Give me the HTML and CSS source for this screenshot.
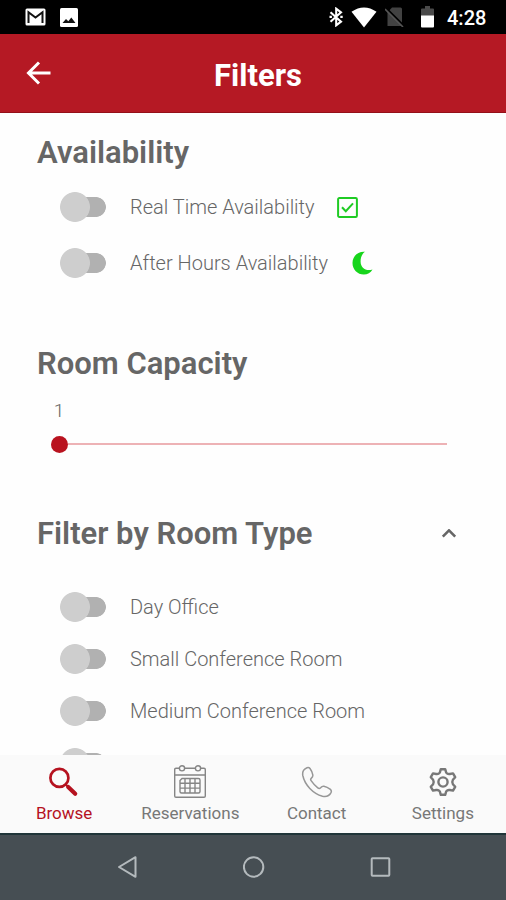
FILE: index.html
```html
<!DOCTYPE html>
<html lang="en">
<head>
    <meta charset="UTF-8">
    <title>Filters</title>
    <link rel="stylesheet" href="styles.css">
</head>
<body>
    <div class="status-bar">
        <div class="status-left">
            <svg width="21" height="18" viewBox="0 0 21 18">
                <rect x="0.5" y="0.5" width="20" height="17" rx="1.5" fill="#fff"/>
                <path d="M3.5 15V4.2L10.5 9.5L17.5 4.2V15" fill="none" stroke="#111" stroke-width="2"/>
            </svg>
            <svg width="18" height="19" viewBox="0 0 18 19">
                <rect width="18" height="19" rx="1.5" fill="#fff"/>
                <path d="M2.5 15L6 11L8.3 13.2L11.3 9.5L15.5 15Z" fill="#111"/>
            </svg>
        </div>
        <div class="status-right">
            <svg class="bluetooth" width="14" height="20" viewBox="0 0 14 20">
                <path d="M1.5 5.3L12 14.6L7.2 18.3V1.7L12 5.4L1.5 14.7" fill="none" stroke="#fff" stroke-width="2.1"/>
                <path d="M0.5 8.7h2.4v2.4H0.5zM11.3 8.7h2.4v2.4h-2.4z" fill="#fff"/>
            </svg>
            <svg class="wifi" width="26" height="21" viewBox="0 0 26 21">
                <path d="M0.5 4.8Q13 -3.8 25.5 4.8L13 20.5Z" fill="#fff"/>
            </svg>
            <svg class="no-sim" width="20" height="20" viewBox="0 0 20 20">
                <path d="M7 0.5H15.5Q17 0.5 17 2V19H2.5V5.5Z" fill="#424242"/>
                <path d="M1.5 1.5L19.5 19.5" stroke="#000" stroke-width="2"/>
                <path d="M0 2L18 20" stroke="#555" stroke-width="1.6"/>
            </svg>
            <svg class="battery" width="13" height="22" viewBox="0 0 13 22">
                <path d="M0 3.5Q0 2.5 1 2.5H4V0H9V2.5H12Q13 2.5 13 3.5V10H0Z" fill="#4a4a4a"/>
                <path d="M0 9.5H13V20.5Q13 21.5 12 21.5H1Q0 21.5 0 20.5Z" fill="#fff"/>
            </svg>
            <span class="time">4:28</span>
        </div>
    </div>

    <div class="header">
        <svg class="back" width="26" height="24" viewBox="0 0 26 24">
            <path d="M24.5 12H2.5M13 1.5L2.5 12L13 22.5" fill="none" stroke="#fff" stroke-width="3"/>
        </svg>
        <h1>Filters</h1>
    </div>

    <div class="content">
        <h2>Availability</h2>
        <div class="row">
            <div class="switch"></div>
            <span class="label">Real Time Availability</span>
            <svg class="check-icon" width="21" height="21" viewBox="0 0 21 21">
                <rect x="1.1" y="1.1" width="18.8" height="18.8" rx="1.2" fill="none" stroke="#1fcb24" stroke-width="2"/>
                <path d="M5 10.2L8.8 14.2L16 6.3" fill="none" stroke="#1fcb24" stroke-width="2"/>
            </svg>
        </div>
        <div class="row">
            <div class="switch"></div>
            <span class="label">After Hours Availability</span>
            <svg class="moon-icon" width="21" height="24" viewBox="0 0 21 24">
                <path d="M13 0.8C5.5 0.2 0.5 5.4 0.5 12C0.5 18.6 5.5 23.5 11.8 23.5C15.6 23.5 18.6 21.7 20.5 18.5C14 20.5 8.6 17 8.6 10.4C8.6 6.3 10.2 2.8 13 0.8Z" fill="#17d51c"/>
            </svg>
        </div>

        <h2 class="capacity-title">Room Capacity</h2>
        <div class="capacity">
            <div class="capacity-value">1</div>
            <div class="slider">
                <div class="slider-thumb"></div>
                <div class="slider-track"></div>
            </div>
        </div>

        <div class="type-title">
            <h2>Filter by Room Type</h2>
            <svg width="16" height="10" viewBox="0 0 16 10">
                <path d="M1.8 7.6L8 1.4L14.2 7.6" fill="none" stroke="#666" stroke-width="2.6"/>
            </svg>
        </div>
        <div class="type-list">
            <div class="row">
                <div class="switch"></div>
                <span class="label">Day Office</span>
            </div>
            <div class="row">
                <div class="switch"></div>
                <span class="label">Small Conference Room</span>
            </div>
            <div class="row">
                <div class="switch"></div>
                <span class="label">Medium Conference Room</span>
            </div>
            <div class="row">
                <div class="switch"></div>
            </div>
        </div>
    </div>

    <div class="tab-bar">
        <div class="tab active">
            <svg width="32" height="34" viewBox="0 0 32 34">
                <circle cx="11.4" cy="12.9" r="9" fill="none" stroke="#b5121f" stroke-width="2.7"/>
                <path d="M17.6 19.4L21 22.6" stroke="#b5121f" stroke-width="2"/>
                <path d="M20.2 22L27.2 28.8" stroke="#b5121f" stroke-width="4.2" stroke-linecap="round"/>
            </svg>
            <span>Browse</span>
        </div>
        <div class="tab">
            <svg width="32" height="34" viewBox="0 0 32 34" fill="none" stroke="#858585" stroke-width="1.4">
                <path d="M5.4 3.2H2Q0.7 3.2 0.7 4.5V31Q0.7 32.3 2 32.3H30Q31.3 32.3 31.3 31V4.5Q31.3 3.2 30 3.2H26.6M10.6 3.2H21.4M0.7 10H31.3"/>
                <circle cx="8" cy="3.3" r="2.6"/>
                <circle cx="24" cy="3.3" r="2.6"/>
                <path d="M8 13.5H24.5Q26 13.5 26 15V26.5Q26 28 24.5 28H7.5Q6 28 6 26.5V15.5ZM6 18.2H26M6 23.1H26M11 13.5V28M16 13.5V28M21 13.5V28"/>
            </svg>
            <span>Reservations</span>
        </div>
        <div class="tab">
            <svg width="32" height="34" viewBox="0 0 32 34" fill="none" stroke="#979797" stroke-width="1.5">
                <path d="M6 2.8C3 4 1.2 7 1.8 10.5C3.8 20 12 28.5 21.5 31.2C25 32 28.4 30.6 30 27.6C30.6 26.4 30.4 25.3 29.4 24.4C27.3 22.7 25.2 21.6 22.9 21.2C21.5 21 20.4 21.8 19.6 22.8C18.8 23.7 17.8 23.7 16.8 22.9C14.1 20.8 12 18.5 10.1 15.7C9.4 14.7 9.5 13.9 10.4 13.1C11.5 12.2 12 11.2 11.8 9.9C11.4 7.6 10.5 5.5 9 3.5C8.2 2.5 7.2 2.3 6 2.8Z"/>
            </svg>
            <span>Contact</span>
        </div>
        <div class="tab">
            <svg width="32" height="34" viewBox="0 0 32 34" fill="none" stroke="#777" stroke-width="2.4" stroke-linejoin="round">
                <path d="M13.8 4.2H18.2L19.2 7.6Q20.5 9.4 22.8 9L26 8.4L28.2 12.2L25.9 14.8Q24.7 17 25.9 19.2L28.2 21.8L26 25.6L22.8 25Q20.5 24.6 19.2 26.4L18.2 29.8H13.8L12.8 26.4Q11.5 24.6 9.2 25L6 25.6L3.8 21.8L6.1 19.2Q7.3 17 6.1 14.8L3.8 12.2L6 8.4L9.2 9Q11.5 9.4 12.8 7.6Z"/>
                <circle cx="16" cy="17" r="4.6"/>
            </svg>
            <span>Settings</span>
        </div>
    </div>

    <div class="nav-bar">
        <svg width="22" height="24" viewBox="0 0 22 24">
            <path d="M3 12L19.5 2.2V21.8Z" fill="none" stroke="#b4babd" stroke-width="2" stroke-linejoin="round"/>
        </svg>
        <svg width="22" height="24" viewBox="0 0 22 24">
            <circle cx="10.6" cy="12" r="9.7" fill="none" stroke="#b4babd" stroke-width="2"/>
        </svg>
        <svg width="22" height="24" viewBox="0 0 22 24">
            <rect x="1.7" y="3.2" width="17.6" height="17.6" rx="0.8" fill="none" stroke="#b4babd" stroke-width="2"/>
        </svg>
    </div>
</body>
</html>
```
FILE: styles.css
```css
* {
    margin: 0;
    padding: 0;
    box-sizing: border-box;
}

body {
    width: 506px;
    height: 900px;
    display: flex;
    flex-direction: column;
    overflow: hidden;
    background: #fefefe;
    font-family: Roboto, "Liberation Sans", sans-serif;
    color: #666;
}

svg {
    display: block;
    flex-shrink: 0;
}

/* status bar */
.status-bar {
    height: 34px;
    flex-shrink: 0;
    padding: 0 19px 0 25px;
    background: #000;
    display: flex;
    align-items: center;
    justify-content: space-between;
}

.status-left,
.status-right {
    display: flex;
    align-items: center;
}

.status-left {
    gap: 14px;
}

.wifi {
    margin-left: 8px;
}

.no-sim {
    margin-left: 8px;
}

.battery {
    margin-left: 16px;
}

.time {
    width: 40px;
    margin-left: 13px;
    padding-top: 1px;
    color: #fff;
    font-size: 20px;
    font-weight: 500;
    line-height: 34px;
    white-space: nowrap;
}

/* header */
.header {
    height: 79px;
    flex-shrink: 0;
    padding: 0 26px;
    background: #b51924;
    border-bottom: 1px solid #941019;
    display: grid;
    grid-template-columns: 26px 1fr 26px;
    align-items: center;
}

.back {
    margin-top: -1px;
}

.header h1 {
    color: #fff;
    font-size: 31px;
    font-weight: 700;
    line-height: 40px;
    text-align: center;
    padding: 5px 0 0 10px;
}

/* filters */
.content {
    flex: 1;
    min-height: 0;
    overflow: hidden;
    padding: 20px 37px 0;
}

h2 {
    font-size: 31px;
    font-weight: 600;
    line-height: 40px;
    white-space: nowrap;
}

h2 + .row {
    margin-top: 6px;
}

.row {
    height: 56px;
    padding-left: 23px;
    display: flex;
    align-items: center;
}

.switch {
    width: 46px;
    height: 30px;
    margin-right: 24px;
    flex-shrink: 0;
    background:
        radial-gradient(circle at 15px 15px, #cecece 14.5px, transparent 15.3px),
        linear-gradient(#b1b1b1, #b1b1b1) 15px 5px / 20px 20px no-repeat,
        radial-gradient(circle at 36px 15px, #b1b1b1 9.5px, transparent 10.2px);
}

.label {
    font-size: 20px;
    font-weight: 350;
    line-height: 26px;
    white-space: nowrap;
}

.check-icon {
    margin-left: 22px;
}

.moon-icon {
    margin-left: 24px;
}

.capacity-title {
    margin-top: 53px;
}

.capacity {
    padding: 15px 22px 0 14px;
}

.capacity-value {
    width: 16px;
    font-size: 19px;
    font-weight: 300;
    line-height: 24px;
    text-align: center;
}

.slider {
    height: 18px;
    margin-top: 12px;
    display: flex;
    align-items: center;
}

.slider-thumb {
    width: 17px;
    height: 17px;
    border-radius: 50%;
    background: #b9131f;
}

.slider-track {
    flex: 1;
    height: 2px;
    background: #edb2b5;
}

.type-title {
    margin-top: 61px;
    padding-right: 12px;
    display: flex;
    align-items: center;
    justify-content: space-between;
}

.type-list {
    margin-top: 27px;
}

.type-list .row {
    height: 52px;
}

/* bottom tabs */
.tab-bar {
    height: 78px;
    flex-shrink: 0;
    padding-left: 1px;
    background: #fafafa;
    display: grid;
    grid-template-columns: repeat(4, 1fr);
}

.tab {
    display: flex;
    flex-direction: column;
    align-items: center;
    padding-top: 10px;
    color: #777;
    font-size: 17px;
    line-height: 22px;
}

.tab span {
    margin-top: 3px;
}

.tab.active {
    color: #b5121f;
}

/* android buttons */
.nav-bar {
    height: 67px;
    flex-shrink: 0;
    padding: 0 0 2px 1px;
    background: #464e53;
    border-top: 2px solid #203539;
    display: flex;
    align-items: center;
    justify-content: center;
    gap: 105px;
}
```
